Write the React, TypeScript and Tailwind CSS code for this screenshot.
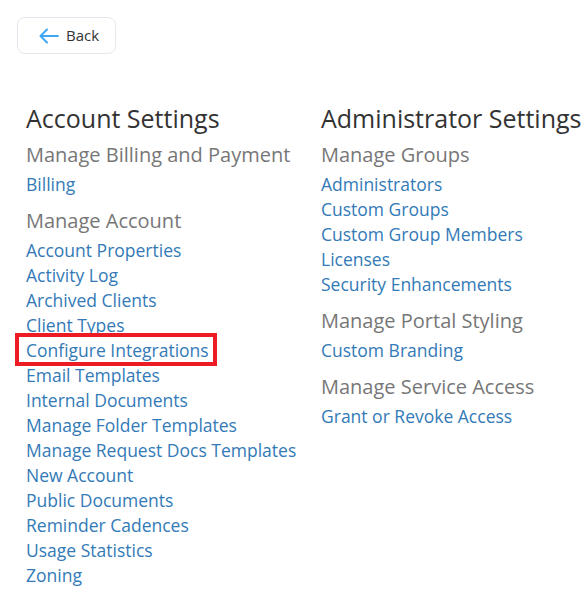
const accountSections = [
  { title: 'Manage Billing and Payment', links: ['Billing'] },
  {
    title: 'Manage Account',
    links: [
      'Account Properties',
      'Activity Log',
      'Archived Clients',
      'Client Types',
      'Configure Integrations',
      'Email Templates',
      'Internal Documents',
      'Manage Folder Templates',
      'Manage Request Docs Templates',
      'New Account',
      'Public Documents',
      'Reminder Cadences',
      'Usage Statistics',
      'Zoning',
    ],
  },
];

const adminSections = [
  {
    title: 'Manage Groups',
    links: ['Administrators', 'Custom Groups', 'Custom Group Members', 'Licenses', 'Security Enhancements'],
  },
  { title: 'Manage Portal Styling', links: ['Custom Branding'] },
  { title: 'Manage Service Access', links: ['Grant or Revoke Access'] },
];

type Section = { title: string; links: string[] };

function SettingsColumn({ heading, sections }: { heading: string; sections: Section[] }) {
  return (
    <div className="flex flex-col">
      <h2 className="text-[25px] leading-[30px] text-[#333333] whitespace-nowrap">{heading}</h2>
      {sections.map((s, i) => (
        <div key={s.title} className={i === 0 ? 'mt-[8px]' : 'mt-[10px]'}>
          <h3 className="text-[20px] leading-[28px] text-[#777777] whitespace-nowrap">{s.title}</h3>
          <ul className="mt-[3px]">
            {s.links.map((l) => (
              <li key={l} className="text-[17.5px] leading-[25px] whitespace-nowrap">
                <a href="#" className="relative inline-block text-[#337ab7]">
                  {l}
                  {l === 'Configure Integrations' && (
                    <span className="absolute -left-[11px] -right-[8px] -top-[5px] -bottom-[3px] border-4 border-[#ed1c24]" />
                  )}
                </a>
              </li>
            ))}
          </ul>
        </div>
      ))}
    </div>
  );
}

export default function App() {
  return (
    <main className="min-h-screen bg-white pt-[17px] pl-[17px]" style={{ fontFamily: '"Open Sans", sans-serif' }}>
      <button className="flex h-[37px] items-center gap-[7px] rounded-[8px] border border-[#e4e7ed] bg-white pl-[21px] pr-[16px] text-[15px] text-[#333333]">
        <svg width="20" height="16" viewBox="0 0 20 16" fill="none" stroke="#3fa6f2" strokeWidth="2" strokeLinecap="round" strokeLinejoin="round">
          <path d="M19 8H1.5M8 1.5 1.5 8 8 14.5" />
        </svg>
        Back
      </button>
      <div className="mt-[49px] grid grid-cols-[295px_auto] pl-[9px]">
        <SettingsColumn heading="Account Settings" sections={accountSections} />
        <SettingsColumn heading="Administrator Settings" sections={adminSections} />
      </div>
    </main>
  );
}
